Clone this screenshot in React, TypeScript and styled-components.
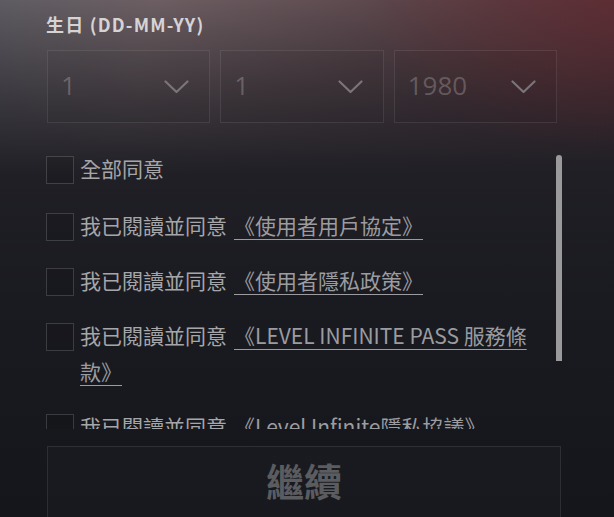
import styled, { createGlobalStyle } from "styled-components";

const Global = createGlobalStyle`
	html, body {
		margin: 0;
		padding: 0;
		background: #14161b;
	}
	* {
		box-sizing: border-box;
	}
`;

const Page = styled.div`
	width: 614px;
	height: 517px;
	overflow: hidden;
	padding: 10px 52px 0 46px;
	font-family: "Noto Sans CJK TC", "Noto Sans", sans-serif;
	background:
		radial-gradient(ellipse 55% 40% at 100% 0%, rgba(105, 40, 46, 0.5), rgba(105, 40, 46, 0) 75%),
		linear-gradient(180deg, rgba(29, 29, 35, 0) 0px, rgba(29, 29, 35, 0.55) 95px, #1f1f25 175px, #1a1b21 300px, #14161b 517px),
		linear-gradient(100deg, #5e5c62 0%, #6c5e62 22%, #5b474c 55%, #4b2c32 100%);
`;

const FieldLabel = styled.div`
	font-size: 18px;
	font-weight: 700;
	letter-spacing: 1.2px;
	line-height: 28px;
	color: #d6d3d5;
`;

const SelectRow = styled.div`
	display: grid;
	grid-template-columns: repeat(3, 1fr);
	gap: 10px;
	width: 510px;
	margin-top: 12px;
	margin-left: 1px;
`;

const SelectBox = styled.div`
	height: 73px;
	display: flex;
	align-items: center;
	justify-content: space-between;
	padding: 0 20px 3px 13px;
	border: 1px solid rgba(255, 255, 255, 0.09);
	background: rgba(0, 0, 0, 0.04);
	color: rgba(255, 255, 255, 0.22);
	font-size: 26px;
	font-family: "Open Sans", "Noto Sans", sans-serif;

	svg {
		width: 25px;
		height: 14px;
		margin-top: 3px;
	}
`;

const ListWrap = styled.div`
	position: relative;
	width: 516px;
	margin-top: 18px;
`;

const ListScroll = styled.div`
	height: 288px;
	overflow: hidden;
	padding: 11px 22px 0 0;
`;

const Thumb = styled.div`
	position: absolute;
	left: 510px;
	top: 14px;
	width: 6px;
	height: 206px;
	border-radius: 3px 3px 0 0;
	background: #9a9a9c;
`;

const Row = styled.label<{ $first?: boolean }>`
	display: flex;
	align-items: flex-start;
	gap: 6px;
	margin-bottom: ${(p) => (p.$first ? "21px" : "19px")};
	font-size: 21px;
	line-height: 36px;
	color: #a6a6a9;
`;

const RowText = styled.span`
	position: relative;
	top: -2px;
`;

const Box = styled.span`
	flex: none;
	width: 28px;
	height: 28px;
	margin-top: 4px;
	border: 1.5px solid rgba(255, 255, 255, 0.16);
	background: rgba(0, 0, 0, 0.08);
`;

const Link = styled.a`
	color: #9c9ca0;
	text-decoration: underline;
	text-underline-offset: 5px;
	text-decoration-thickness: 1px;
	margin-left: 7px;
`;

const Continue = styled.button`
	display: block;
	width: 514px;
	height: 80px;
	margin: 17px 0 0 1px;
	border: 1px solid rgba(255, 255, 255, 0.09);
	background: rgba(255, 255, 255, 0.015);
	color: #5b5c60;
	font-family: "Noto Sans CJK TC", sans-serif;
	font-size: 38px;
	font-weight: 700;
	line-height: 56px;
	padding: 0 0 12px;
	text-align: center;
`;

function Chevron() {
	return (
		<svg viewBox="0 0 25 14" fill="none">
			<polyline
				points="1.5,1.5 12.5,12 23.5,1.5"
				stroke="#7b7479"
				strokeWidth="2.2"
				strokeLinecap="round"
				strokeLinejoin="round"
			/>
		</svg>
	);
}

const dates = ["1", "1", "1980"];

const terms = [
	"《使用者用戶協定》",
	"《使用者隱私政策》",
	"《LEVEL INFINITE PASS 服務條款》",
	"《Level Infinite隱私協議》",
];

function App() {
	return (
		<Page>
			<Global />
			<FieldLabel>生日 (DD-MM-YY)</FieldLabel>
			<SelectRow>
				{dates.map((d, i) => (
					<SelectBox key={i}>
						<span>{d}</span>
						<Chevron />
					</SelectBox>
				))}
			</SelectRow>
			<ListWrap>
				<ListScroll>
					<Row $first>
						<Box />
						<RowText>全部同意</RowText>
					</Row>
					{terms.map((t) => (
						<Row key={t}>
							<Box />
							<RowText>
								我已閱讀並同意
								<Link href="#">{t}</Link>
							</RowText>
						</Row>
					))}
				</ListScroll>
				<Thumb />
			</ListWrap>
			<Continue>繼續</Continue>
		</Page>
	);
}

export default App;
